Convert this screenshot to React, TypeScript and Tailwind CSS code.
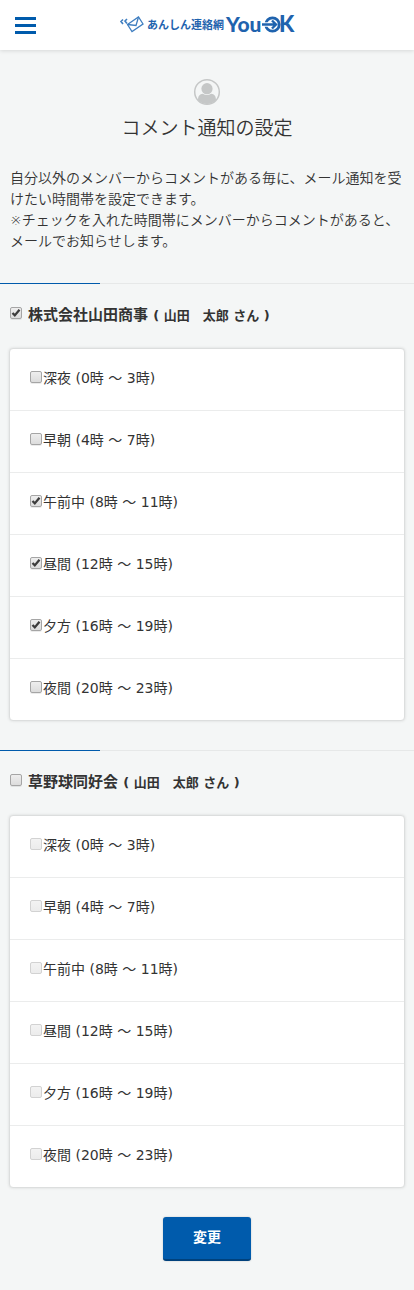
import { useState } from "react";

const periods = [
  "深夜 (0時 〜 3時)",
  "早朝 (4時 〜 7時)",
  "午前中 (8時 〜 11時)",
  "昼間 (12時 〜 15時)",
  "夕方 (16時 〜 19時)",
  "夜間 (20時 〜 23時)",
];

type CheckProps = {
  id: string;
  checked: boolean;
  disabled?: boolean;
  onChange: () => void;
};

function Check({ id, checked, disabled = false, onChange }: CheckProps) {
  return (
    <span className="mb-1 grid w-[13px] shrink-0 items-center justify-items-start">
      <input
        id={id}
        type="checkbox"
        checked={checked}
        disabled={disabled}
        onChange={onChange}
        className="peer col-start-1 row-start-1 size-[12px] appearance-none rounded-[2px] border border-[#a5a5a5] bg-linear-to-b from-[#eeeeee] to-[#dcdcdc] shadow-[0_1px_0_rgba(0,0,0,0.08)] disabled:border-[#d2d2d2] disabled:from-[#f3f3f3] disabled:to-[#ececec] disabled:shadow-none"
      />
      <svg
        viewBox="0 0 12 12"
        className="pointer-events-none invisible col-start-1 row-start-1 size-[12px] peer-checked:visible"
        aria-hidden="true"
      >
        <path d="M2.500 6 4.800 8.400 9.500 2.800" fill="none" stroke="#3c3c3c" strokeWidth="2.300" />
      </svg>
    </span>
  );
}

type GroupProps = {
  id: string;
  name: string;
  member: string;
  enabled: boolean;
  selected: number[];
};

function Group({ id, name, member, enabled, selected }: GroupProps) {
  const [on, setOn] = useState(enabled);
  const [picked, setPicked] = useState(selected);
  const toggle = (i: number) =>
    setPicked(picked.includes(i) ? picked.filter((p) => p !== i) : [...picked, i]);

  return (
    <section className="mb-[29px]">
      <div className="h-px bg-[#e6e8e8]">
        <div className="h-px w-[100px] bg-[#005bac]" />
      </div>
      <h2 className="flex h-16 items-center gap-[5px] px-[10px] pb-0.5 text-[15px] font-bold">
        <Check id={id} checked={on} onChange={() => setOn(!on)} />
        <label htmlFor={id}>
          {name} <span className="text-[13px]">( {member} さん )</span>
        </label>
      </h2>
      <ul className="mx-[9px] divide-y divide-[#ebecec] rounded-[4px] border border-[#dcdede] bg-white shadow-[0_0_3px_rgba(0,0,0,0.12)]">
        {periods.map((p, i) => (
          <li key={p} className="flex h-[62px] items-center px-5 pb-0.5 text-[14px] last:h-[61px]">
            <Check
              id={`${id}-${i}`}
              checked={picked.includes(i)}
              disabled={!on}
              onChange={() => toggle(i)}
            />
            <label htmlFor={`${id}-${i}`}>{p}</label>
          </li>
        ))}
      </ul>
    </section>
  );
}

function Logo() {
  return (
    <svg viewBox="0 0 176 32" className="h-8 w-[176px] overflow-visible" role="img" aria-label="あんしん連絡網 YouOK">
      <g transform="translate(0 3)">
        <g fill="none" stroke="#3f7ec0" strokeWidth="1.300">
          <path d="M4 7.500 2 9.500 4 12M8 7 6 9 8 11.500" strokeWidth="1.600" />
          <path d="M8.500 12.500 19.500 5 24 12 13 19.500Z" />
          <path d="M19.500 5 17 13.500 8.500 12.500" />
        </g>
        <g fill="#1f63ae" className="font-['Noto_Sans_CJK_JP',sans-serif] font-bold">
          <text x="28" y="17" fontSize="11">あんしん連絡網</text>
        </g>
        <g fill="#1f63ae" className="font-['Lato','Noto_Sans',sans-serif]">
          <text x="107" y="20" fontSize="21" fontWeight="900">You</text>
          <text x="160" y="20" fontSize="22" fontWeight="900">K</text>
        </g>
        <circle cx="153.500" cy="12.500" r="6.700" fill="none" stroke="#1f63ae" strokeWidth="2.800" />
        <path d="M145 12.500H152" stroke="white" strokeWidth="4.400" />
        <path d="M143 12.500H157M153 8.500 157 12.500 153 16.500" fill="none" stroke="#1f63ae" strokeWidth="2.400" />
      </g>
    </svg>
  );
}

export default function App() {
  return (
    <div className="min-h-screen bg-[#f4f6f6] font-['DejaVu_Sans','Noto_Sans_CJK_JP',sans-serif] text-[#333333]">
      <header className="grid h-[50px] grid-cols-[1fr_auto_1fr] items-center bg-white px-[15px] shadow-[0_1px_4px_rgba(0,0,0,0.12)]">
        <button type="button" aria-label="メニュー" className="flex w-[21px] flex-col gap-1">
          <span className="h-[3px] bg-[#005bac]" />
          <span className="h-[3px] bg-[#005bac]" />
          <span className="h-[3px] bg-[#005bac]" />
        </button>
        <a href="#top">
          <Logo />
        </a>
      </header>

      <main id="top" className="pb-7">
        <div className="flex flex-col items-center pt-7">
          <svg viewBox="0 0 28 28" className="size-7" aria-hidden="true">
            <circle cx="14" cy="14" r="12.300" fill="none" stroke="#c5c7c7" strokeWidth="1.500" />
            <circle cx="14" cy="10.700" r="5.600" fill="#c5c7c7" />
            <path d="M5 22C5.200 18 6.500 16.300 9.800 15.800Q14 18.400 18.200 15.800C21.500 16.300 22.800 18 23 22Q19 26 14 26T5 22Z" fill="#c5c7c7" />
          </svg>
          <h1 className="mt-2 text-[19px] leading-7 font-[350]">コメント通知の設定</h1>
        </div>
        <p className="mt-[26px] mb-[31px] px-[10px] text-[14px] leading-[21px] font-[350]">
          自分以外のメンバーからコメントがある毎に、メール通知を受けたい時間帯を設定できます。
          <br />
          ※チェックを入れた時間帯にメンバーからコメントがあると、メールでお知らせします。
        </p>

        <form onSubmit={(e) => e.preventDefault()}>
          <Group id="yamada" name="株式会社山田商事" member="山田　太郎" enabled selected={[2, 3, 4]} />
          <Group id="baseball" name="草野球同好会" member="山田　太郎" enabled={false} selected={[]} />
          <div className="flex justify-center">
            <button
              type="submit"
              className="h-11 w-[88px] rounded-[3px] border-b-2 border-[#00417c] bg-[#005bac] pb-0.5 text-[14px] font-bold text-white shadow-[0_0_2px_rgba(0,0,0,0.2)]"
            >
              変更
            </button>
          </div>
        </form>
      </main>
    </div>
  );
}
